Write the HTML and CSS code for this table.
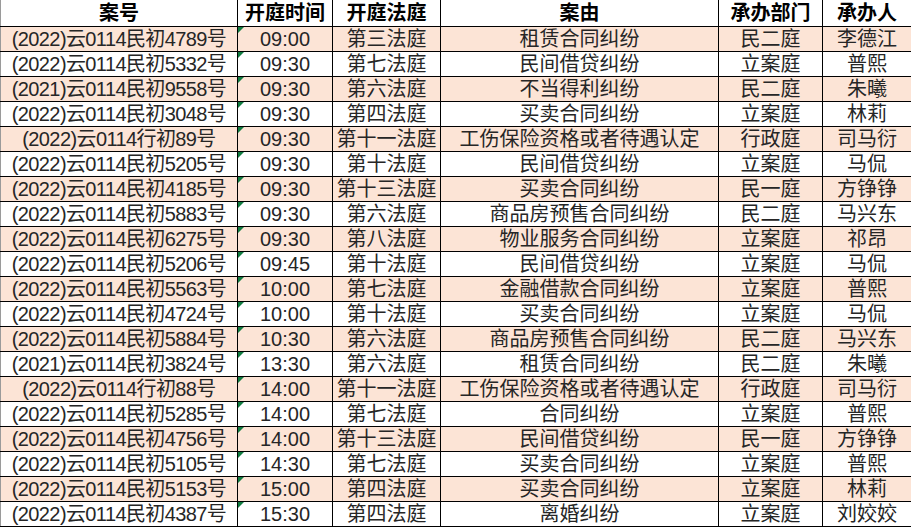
FILE: index.html
```html
<!DOCTYPE html>
<html lang="zh">
<head>
<meta charset="utf-8">
<title>开庭公告</title>
<link rel="stylesheet" href="styles.css">
</head>
<body>
<table class="sheet">
<colgroup>
<col class="c1"><col class="c2"><col class="c3"><col class="c4"><col class="c5"><col class="c6">
</colgroup>
<thead>
<tr><th>案号</th><th>开庭时间</th><th>开庭法庭</th><th>案由</th><th>承办部门</th><th>承办人</th></tr>
</thead>
<tbody>
<tr><td class="n">(2022)云0114民初4789号</td><td class="t">09:00</td><td>第三法庭</td><td>租赁合同纠纷</td><td>民二庭</td><td>李德江</td></tr>
<tr><td class="n">(2022)云0114民初5332号</td><td class="t">09:30</td><td>第七法庭</td><td>民间借贷纠纷</td><td>立案庭</td><td>普熙</td></tr>
<tr><td class="n">(2021)云0114民初9558号</td><td class="t">09:30</td><td>第六法庭</td><td>不当得利纠纷</td><td>民二庭</td><td>朱曦</td></tr>
<tr><td class="n">(2022)云0114民初3048号</td><td class="t">09:30</td><td>第四法庭</td><td>买卖合同纠纷</td><td>立案庭</td><td>林莉</td></tr>
<tr><td class="n">(2022)云0114行初89号</td><td class="t">09:30</td><td>第十一法庭</td><td>工伤保险资格或者待遇认定</td><td>行政庭</td><td>司马衍</td></tr>
<tr><td class="n">(2022)云0114民初5205号</td><td class="t">09:30</td><td>第十法庭</td><td>民间借贷纠纷</td><td>立案庭</td><td>马侃</td></tr>
<tr><td class="n">(2022)云0114民初4185号</td><td class="t">09:30</td><td>第十三法庭</td><td>买卖合同纠纷</td><td>民一庭</td><td>方铮铮</td></tr>
<tr><td class="n">(2022)云0114民初5883号</td><td class="t">09:30</td><td>第六法庭</td><td>商品房预售合同纠纷</td><td>民二庭</td><td>马兴东</td></tr>
<tr><td class="n">(2022)云0114民初6275号</td><td class="t">09:30</td><td>第八法庭</td><td>物业服务合同纠纷</td><td>立案庭</td><td>祁昂</td></tr>
<tr><td class="n">(2022)云0114民初5206号</td><td class="t">09:45</td><td>第十法庭</td><td>民间借贷纠纷</td><td>立案庭</td><td>马侃</td></tr>
<tr><td class="n">(2022)云0114民初5563号</td><td class="t">10:00</td><td>第七法庭</td><td>金融借款合同纠纷</td><td>立案庭</td><td>普熙</td></tr>
<tr><td class="n">(2022)云0114民初4724号</td><td class="t">10:00</td><td>第十法庭</td><td>买卖合同纠纷</td><td>立案庭</td><td>马侃</td></tr>
<tr><td class="n">(2022)云0114民初5884号</td><td class="t">10:30</td><td>第六法庭</td><td>商品房预售合同纠纷</td><td>民二庭</td><td>马兴东</td></tr>
<tr><td class="n">(2021)云0114民初3824号</td><td class="t">13:30</td><td>第六法庭</td><td>租赁合同纠纷</td><td>民二庭</td><td>朱曦</td></tr>
<tr><td class="n">(2022)云0114行初88号</td><td class="t">14:00</td><td>第十一法庭</td><td>工伤保险资格或者待遇认定</td><td>行政庭</td><td>司马衍</td></tr>
<tr><td class="n">(2022)云0114民初5285号</td><td class="t">14:00</td><td>第七法庭</td><td>合同纠纷</td><td>立案庭</td><td>普熙</td></tr>
<tr><td class="n">(2022)云0114民初4756号</td><td class="t">14:00</td><td>第十三法庭</td><td>民间借贷纠纷</td><td>民一庭</td><td>方铮铮</td></tr>
<tr><td class="n">(2022)云0114民初5105号</td><td class="t">14:30</td><td>第七法庭</td><td>买卖合同纠纷</td><td>立案庭</td><td>普熙</td></tr>
<tr><td class="n">(2022)云0114民初5153号</td><td class="t">15:00</td><td>第四法庭</td><td>买卖合同纠纷</td><td>立案庭</td><td>林莉</td></tr>
<tr><td class="n">(2022)云0114民初4387号</td><td class="t">15:30</td><td>第四法庭</td><td>离婚纠纷</td><td>立案庭</td><td>刘姣姣</td></tr>
</tbody>
</table>
</body>
</html>
```
FILE: styles.css
```css
html, body {
  margin: 0;
  padding: 0;
  background: #ffffff;
}
.sheet {
  border-collapse: collapse;
  table-layout: fixed;
  width: 911px;
  font-family: "Liberation Sans", "Noto Sans CJK SC", sans-serif;
  font-size: 20px;
  color: #262626;
}
.c1 { width: 237px; }
.c2 { width: 95px; }
.c3 { width: 108px; }
.c4 { width: 278px; }
.c5 { width: 104px; }
.c6 { width: 89px; }
.sheet th {
  height: 26px;
  padding: 0;
  line-height: 24px;
  font-weight: bold;
  color: #000;
  text-align: center;
  border-left: 1px solid #000;
  border-right: 1px solid #000;
  border-bottom: 1px solid #000;
  white-space: nowrap;
  overflow: hidden;
}
.sheet th:first-child {
  border-left: 1px solid #9a9a9a;
}
.sheet td {
  height: 24px;
  padding: 0;
  line-height: 24px;
  text-align: center;
  border: 1px solid #000;
  white-space: nowrap;
  overflow: hidden;
}
.sheet td:first-child {
  border-left: 1px solid #9a9a9a;
}
.sheet td.n {
  letter-spacing: -0.6px;
}
.sheet tbody tr:nth-child(odd) td {
  background: #fce4d6;
}
.sheet td.t {
  position: relative;
}
.sheet td.t::before {
  content: "";
  position: absolute;
  left: 0;
  top: 0;
  width: 0;
  height: 0;
  border-top: 6px solid #107c41;
  border-right: 6px solid transparent;
}
```
